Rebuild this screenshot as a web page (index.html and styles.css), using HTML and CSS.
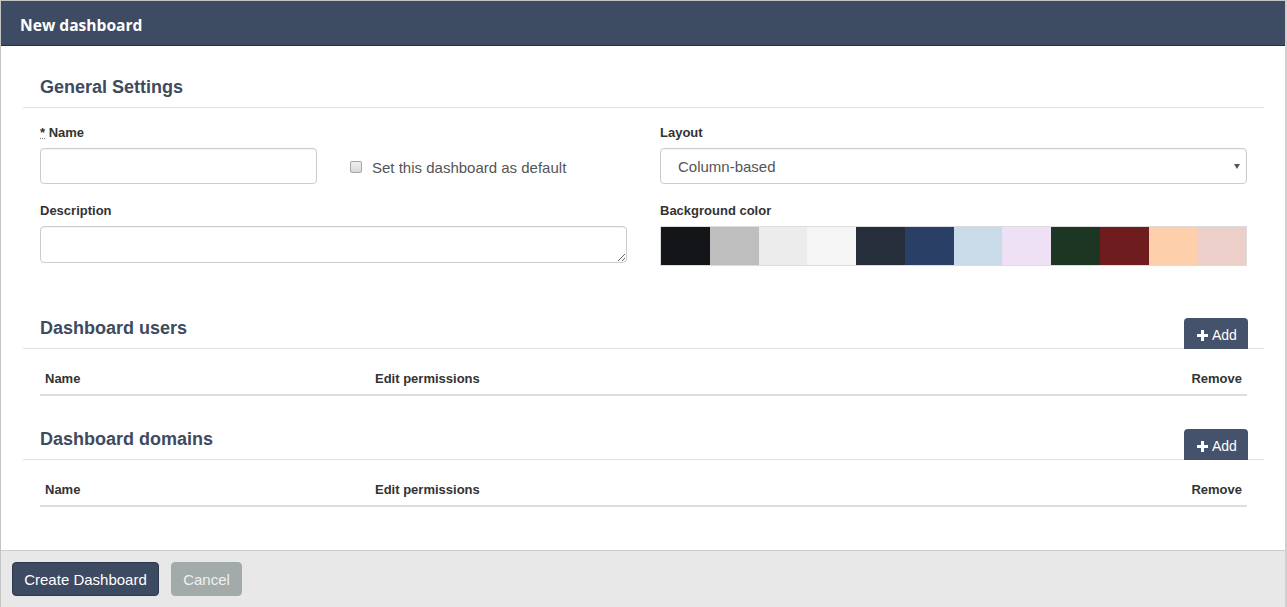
FILE: index.html
```html
<!DOCTYPE html>
<html>
<head>
<meta charset="utf-8">
<link rel="stylesheet" href="styles.css">
</head>
<body>
<div class="modal">
  <div class="modal-header">New dashboard</div>
  <div class="modal-body">
    <div class="section">
      <div class="section-head"><h3>General Settings</h3></div>
      <div class="section-inner">
        <div class="cols">
          <div class="col">
            <label class="lbl"><abbr>*</abbr> Name</label>
            <div class="name-row">
              <input class="input name-input" type="text">
              <div class="check-wrap"><span class="check"></span><span class="check-text">Set this dashboard as default</span></div>
            </div>
            <label class="lbl lbl-desc">Description</label>
            <textarea class="input textarea"></textarea>
          </div>
          <div class="col">
            <label class="lbl">Layout</label>
            <div class="select">Column-based<span class="arrow"></span></div>
            <label class="lbl lbl-desc">Background color</label>
            <div class="swatches">
              <span class="sw" style="background:#141518"></span>
              <span class="sw" style="background:#bebebe"></span>
              <span class="sw" style="background:#ececec"></span>
              <span class="sw" style="background:#f5f5f5"></span>
              <span class="sw" style="background:#272e3b"></span>
              <span class="sw" style="background:#293f66"></span>
              <span class="sw" style="background:#c9dbe9"></span>
              <span class="sw" style="background:#eee0f5"></span>
              <span class="sw" style="background:#1c3623"></span>
              <span class="sw" style="background:#6e1c1e"></span>
              <span class="sw" style="background:#fdd0ab"></span>
              <span class="sw" style="background:#eccfc8"></span>
            </div>
          </div>
        </div>
      </div>
    </div>

    <div class="section section-users">
      <div class="section-head"><h3>Dashboard users</h3><button class="add-btn"><svg width="11" height="11" viewBox="0 0 11 11"><path d="M4 0h3v4h4v3H7v4H4V7H0V4h4z" fill="#fff"/></svg>Add</button></div>
      <div class="section-inner">
        <table class="tbl">
          <thead><tr><th class="c1">Name</th><th>Edit permissions</th><th class="c3">Remove</th></tr></thead>
        </table>
      </div>
    </div>

    <div class="section section-domains">
      <div class="section-head"><h3>Dashboard domains</h3><button class="add-btn"><svg width="11" height="11" viewBox="0 0 11 11"><path d="M4 0h3v4h4v3H7v4H4V7H0V4h4z" fill="#fff"/></svg>Add</button></div>
      <div class="section-inner">
        <table class="tbl">
          <thead><tr><th class="c1">Name</th><th>Edit permissions</th><th class="c3">Remove</th></tr></thead>
        </table>
      </div>
    </div>
  </div>
  <div class="modal-footer">
    <button class="btn btn-primary">Create Dashboard</button>
    <button class="btn btn-cancel">Cancel</button>
  </div>
</div>
</body>
</html>
```
FILE: styles.css
```css
* { box-sizing: border-box; }
html, body { margin: 0; padding: 0; background: #fff; }
body { font-family: "Liberation Sans", Arial, sans-serif; color: #333; }

.modal {
  width: 1287px;
  height: 607px;
  border-left: 1px solid #c4c4c4;
  border-right: 2px solid #cfcfcf;
  border-top: 1px solid #c4c4c4;
  display: flex;
  flex-direction: column;
  overflow: hidden;
}

.modal-header {
  height: 45px;
  background: #3d4b63;
  border-bottom: 1px solid #27303f;
  color: #fff;
  font-family: "Open Sans", sans-serif;
  font-weight: 700;
  font-size: 15.6px;
  line-height: 44px;
  padding: 2px 0 0 19px;
  flex: none;
}

.modal-body {
  flex: 1;
  padding: 31px 21px 0 22px;
}

.section-head {
  display: flex;
  justify-content: space-between;
  align-items: flex-end;
  border-bottom: 1px solid #e2e2e2;
  padding-left: 17px;
  padding-right: 16px;
}
.section-head h3 {
  margin: 0;
  font-size: 18px;
  line-height: 20px;
  font-weight: 700;
  color: #3d4a60;
  padding-bottom: 10px;
}

.section-inner { padding: 0 17px; }

.cols {
  display: grid;
  grid-template-columns: 587px 587px;
  column-gap: 33px;
  padding-top: 16px;
}

.lbl {
  display: block;
  font-size: 13px;
  line-height: 18px;
  font-weight: 700;
  color: #333;
  margin-bottom: 6px;
}
.lbl abbr { text-decoration: underline dotted #888; }
.lbl-desc { margin-top: 18px; }

.input {
  display: block;
  border: 1px solid #ccc;
  border-radius: 4px;
  background: #fff;
  font-family: inherit;
  box-shadow: inset 0 1px 1px rgba(0,0,0,0.05);
}

.name-row {
  display: flex;
  align-items: center;
  margin-top: 1px;
}
.name-input { width: 277px; height: 36px; }
.check-wrap {
  display: flex;
  align-items: center;
  margin-left: 33px;
  padding-top: 2px;
}
.check {
  width: 12px;
  height: 12px;
  border: 1px solid #a4a4a4;
  border-radius: 2px;
  background: linear-gradient(#f0f0f0, #d8d8d8);
  margin-right: 10px;
}
.check-text {
  font-size: 15px;
  color: #555;
}

.textarea {
  width: 587px;
  height: 37px;
  resize: vertical;
}

.select {
  position: relative;
  height: 36px;
  border: 1px solid #ccc;
  border-radius: 4px;
  font-size: 15px;
  color: #555;
  line-height: 35px;
  padding-left: 17px;
  box-shadow: inset 0 1px 1px rgba(0,0,0,0.05);
}
.arrow {
  position: absolute;
  right: 6px;
  top: 15px;
  width: 0;
  height: 0;
  border-left: 3px solid transparent;
  border-right: 3px solid transparent;
  border-top: 5px solid #555;
}

.swatches {
  display: flex;
  height: 40px;
  border: 1px solid #dcdcdc;
}
.sw { flex: 0 0 48.75px; height: 100%; }

.section-users { margin-top: 52px; }
.section-domains { margin-top: 33px; }

.add-btn {
  display: flex;
  align-items: center;
  gap: 4px;
  height: 31px;
  width: 64px;
  margin-bottom: -1px;
  background: #44526c;
  color: #fff;
  border: none;
  border-radius: 4px 4px 0 0;
  font-family: "Liberation Sans", Arial, sans-serif;
  font-size: 14px;
  padding: 3px 0 0 13px;
}

.tbl {
  width: 100%;
  border-collapse: collapse;
  margin-top: 13px;
}
.tbl th {
  text-align: left;
  font-size: 13px;
  line-height: 18px;
  font-weight: 700;
  color: #333;
  padding: 8px 5px 6px;
  border-bottom: 2px solid #ddd;
}
.tbl th.c1 { width: 330px; }
.tbl th.c3 { text-align: right; }

.modal-footer {
  flex: none;
  height: 57px;
  background: #e8e8e8;
  border-top: 1px solid #cccccc;
  padding: 11px 11px;
  display: flex;
  gap: 12px;
  align-items: flex-start;
}
.btn {
  height: 34px;
  font-family: "Liberation Sans", Arial, sans-serif;
  font-size: 15px;
  border-radius: 4px;
  padding: 0;
  white-space: nowrap;
  text-align: center;
}
.btn-primary {
  width: 147px;
  background: #3c4a62;
  border: 1px solid #2f3a4e;
  color: #fff;
}
.btn-cancel {
  width: 71px;
  background: #a2aaaa;
  border: 1px solid #a2aaaa;
  color: #eef2f2;
}
```
